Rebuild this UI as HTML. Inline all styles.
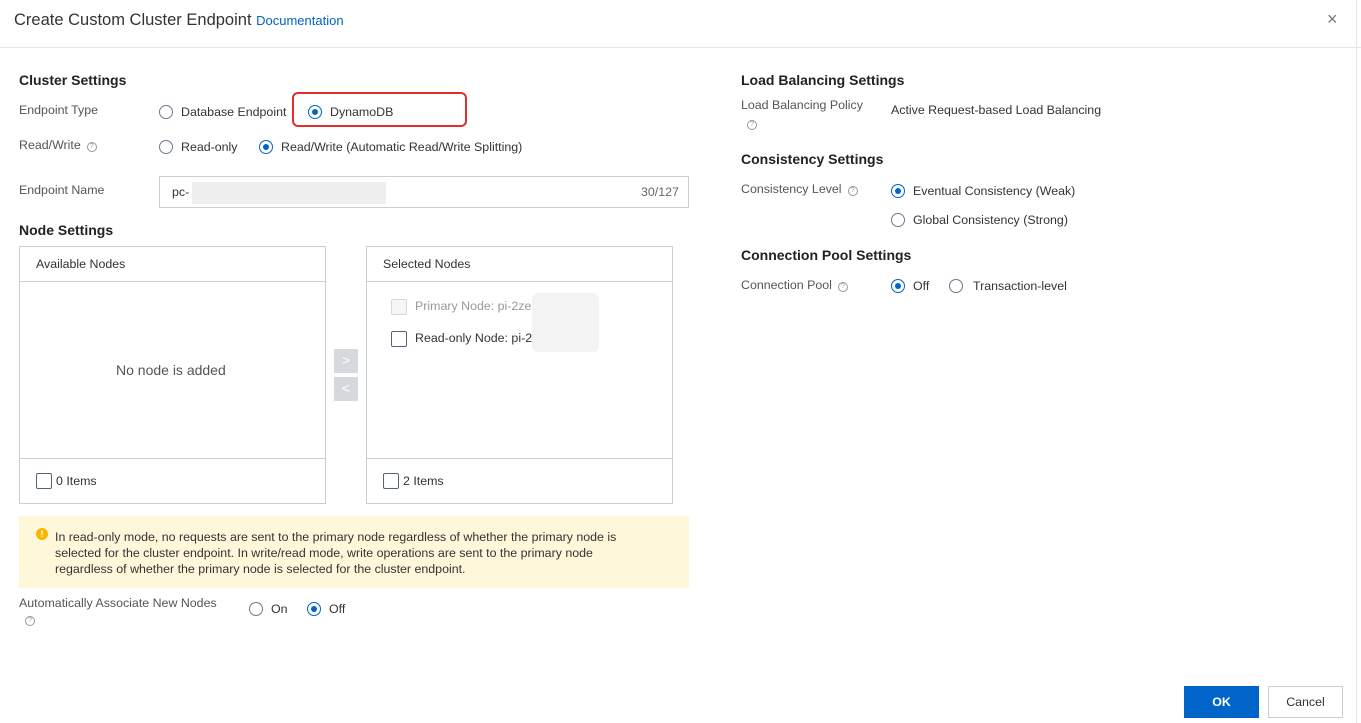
<!DOCTYPE html>
<html><head><meta charset="utf-8"><style>
*{box-sizing:border-box;margin:0;padding:0}
body{width:1361px;height:723px;background:#fff;font-family:"Liberation Sans",Arial,sans-serif;color:#333;font-size:12.4px;position:relative;overflow:hidden}
.a{position:absolute;white-space:nowrap}
.h{font-size:14px;font-weight:bold;color:#222}
.lbl{color:#555}
.r{position:absolute;width:14px;height:14px;border:1px solid #6b7a8c;border-radius:50%;background:#fff}
.r.on{border-color:#0064c8}
.r.on::after{content:"";position:absolute;left:3px;top:3px;width:6px;height:6px;border-radius:50%;background:#0064c8}
.q{display:inline-block;width:10px;height:10px;border:1px solid #999;border-radius:50%;font-size:7px;line-height:8px;text-align:center;color:#999;vertical-align:1px;margin-left:6px}
.cb{position:absolute;width:16px;height:16px;border:1px solid #546478;border-radius:2px;background:#fff}
.box{position:absolute;border:1px solid #c9cfd7}
</style></head><body>
<div class="a" style="left:14px;top:11px;font-size:16.5px;color:#333">Create Custom Cluster Endpoint <span style="font-size:13px;color:#0064c8">Documentation</span></div>
<div class="a" style="left:1327px;top:9px;font-size:18px;color:#777">×</div>
<div class="a" style="left:0;top:47px;width:1361px;border-top:1px solid #e3e5e8"></div>
<div class="a" style="left:1356px;top:0;height:723px;border-left:1px solid #e3e5e8"></div>

<div class="a h" style="left:19px;top:72px">Cluster Settings</div>
<div class="a lbl" style="left:19px;top:103px">Endpoint Type</div>
<div class="r" style="left:159px;top:105px"></div><div class="a" style="left:181px;top:105px">Database Endpoint</div>
<div class="a" style="left:292px;top:92px;width:175px;height:35px;border:2px solid #e02d2d;border-radius:6px"></div>
<div class="r on" style="left:308px;top:105px"></div><div class="a" style="left:330px;top:105px">DynamoDB</div>
<div class="a lbl" style="left:19px;top:138px">Read/Write<span class="q">?</span></div>
<div class="r" style="left:159px;top:140px"></div><div class="a" style="left:181px;top:140px">Read-only</div>
<div class="r on" style="left:259px;top:140px"></div><div class="a" style="left:281px;top:140px">Read/Write (Automatic Read/Write Splitting)</div>
<div class="a lbl" style="left:19px;top:183px">Endpoint Name</div>
<div class="box" style="left:159px;top:176px;width:530px;height:32px"></div>
<div class="a" style="left:172px;top:185px">pc-</div>
<div class="a" style="left:192px;top:182px;width:194px;height:22px;background:#eee"></div>
<div class="a" style="left:641px;top:185px;color:#666">30/127</div>

<div class="a h" style="left:19px;top:222px">Node Settings</div>
<div class="box" style="left:19px;top:246px;width:307px;height:258px"></div>
<div class="a" style="left:19px;top:281px;width:307px;border-top:1px solid #c9cfd7"></div>
<div class="a" style="left:19px;top:458px;width:307px;border-top:1px solid #c9cfd7"></div>
<div class="a" style="left:36px;top:257px">Available Nodes</div>
<div class="a" style="left:116px;top:362px;font-size:14px;color:#555">No node is added</div>
<div class="cb" style="left:36px;top:473px"></div><div class="a" style="left:56px;top:474px">0 Items</div>

<div class="a" style="left:334px;top:349px;width:24px;height:24px;background:#d5d9de;color:#fff;text-align:center;line-height:23px;font-size:14px">&gt;</div>
<div class="a" style="left:334px;top:377px;width:24px;height:24px;background:#d5d9de;color:#fff;text-align:center;line-height:23px;font-size:14px">&lt;</div>

<div class="box" style="left:366px;top:246px;width:307px;height:258px"></div>
<div class="a" style="left:366px;top:281px;width:307px;border-top:1px solid #c9cfd7"></div>
<div class="a" style="left:366px;top:458px;width:307px;border-top:1px solid #c9cfd7"></div>
<div class="a" style="left:383px;top:257px">Selected Nodes</div>
<div class="cb" style="left:391px;top:299px;border-color:#d5d9de;background:#f5f6f7"></div><div class="a" style="left:415px;top:299px;color:#999">Primary Node: pi-2ze</div>
<div class="cb" style="left:391px;top:331px"></div><div class="a" style="left:415px;top:331px">Read-only Node: pi-2</div>
<div class="a" style="left:532px;top:293px;width:67px;height:59px;background:#f3f3f3;border-radius:6px"></div>

<div class="cb" style="left:383px;top:473px"></div><div class="a" style="left:403px;top:474px">2 Items</div>

<div class="a" style="left:19px;top:516px;width:670px;height:72px;background:#fff7d9"></div>
<div class="a" style="left:36px;top:528px;width:12px;height:12px;border-radius:50%;background:#f5b800;color:#fff;font-size:9px;font-weight:bold;text-align:center;line-height:12px">!</div>
<div class="a" style="left:55px;top:529px;line-height:16px;white-space:normal;width:595px">In read-only mode, no requests are sent to the primary node regardless of whether the primary node is selected for the cluster endpoint. In write/read mode, write operations are sent to the primary node regardless of whether the primary node is selected for the cluster endpoint.</div>

<div class="a lbl" style="left:19px;top:596px">Automatically Associate New Nodes</div>
<div class="a" style="left:19px;top:612px"><span class="q" style="margin-left:6px">?</span></div>
<div class="r" style="left:249px;top:602px"></div><div class="a" style="left:271px;top:602px">On</div>
<div class="r on" style="left:307px;top:602px"></div><div class="a" style="left:329px;top:602px">Off</div>

<div class="a h" style="left:741px;top:72px">Load Balancing Settings</div>
<div class="a lbl" style="left:741px;top:98px">Load Balancing Policy</div>
<div class="a" style="left:741px;top:116px"><span class="q">?</span></div>
<div class="a" style="left:891px;top:103px">Active Request-based Load Balancing</div>
<div class="a h" style="left:741px;top:151px">Consistency Settings</div>
<div class="a lbl" style="left:741px;top:182px">Consistency Level<span class="q">?</span></div>
<div class="r on" style="left:891px;top:184px"></div><div class="a" style="left:913px;top:184px">Eventual Consistency (Weak)</div>
<div class="r" style="left:891px;top:213px"></div><div class="a" style="left:913px;top:213px">Global Consistency (Strong)</div>
<div class="a h" style="left:741px;top:247px">Connection Pool Settings</div>
<div class="a lbl" style="left:741px;top:278px">Connection Pool<span class="q">?</span></div>
<div class="r on" style="left:891px;top:279px"></div><div class="a" style="left:913px;top:279px">Off</div>
<div class="r" style="left:949px;top:279px"></div><div class="a" style="left:973px;top:279px">Transaction-level</div>

<div class="a" style="left:1184px;top:686px;width:75px;height:32px;background:#0064c8;color:#fff;font-weight:bold;text-align:center;line-height:32px">OK</div>
<div class="a" style="left:1268px;top:686px;width:75px;height:32px;border:1px solid #c9cfd7;text-align:center;line-height:30px">Cancel</div>
</body></html>
